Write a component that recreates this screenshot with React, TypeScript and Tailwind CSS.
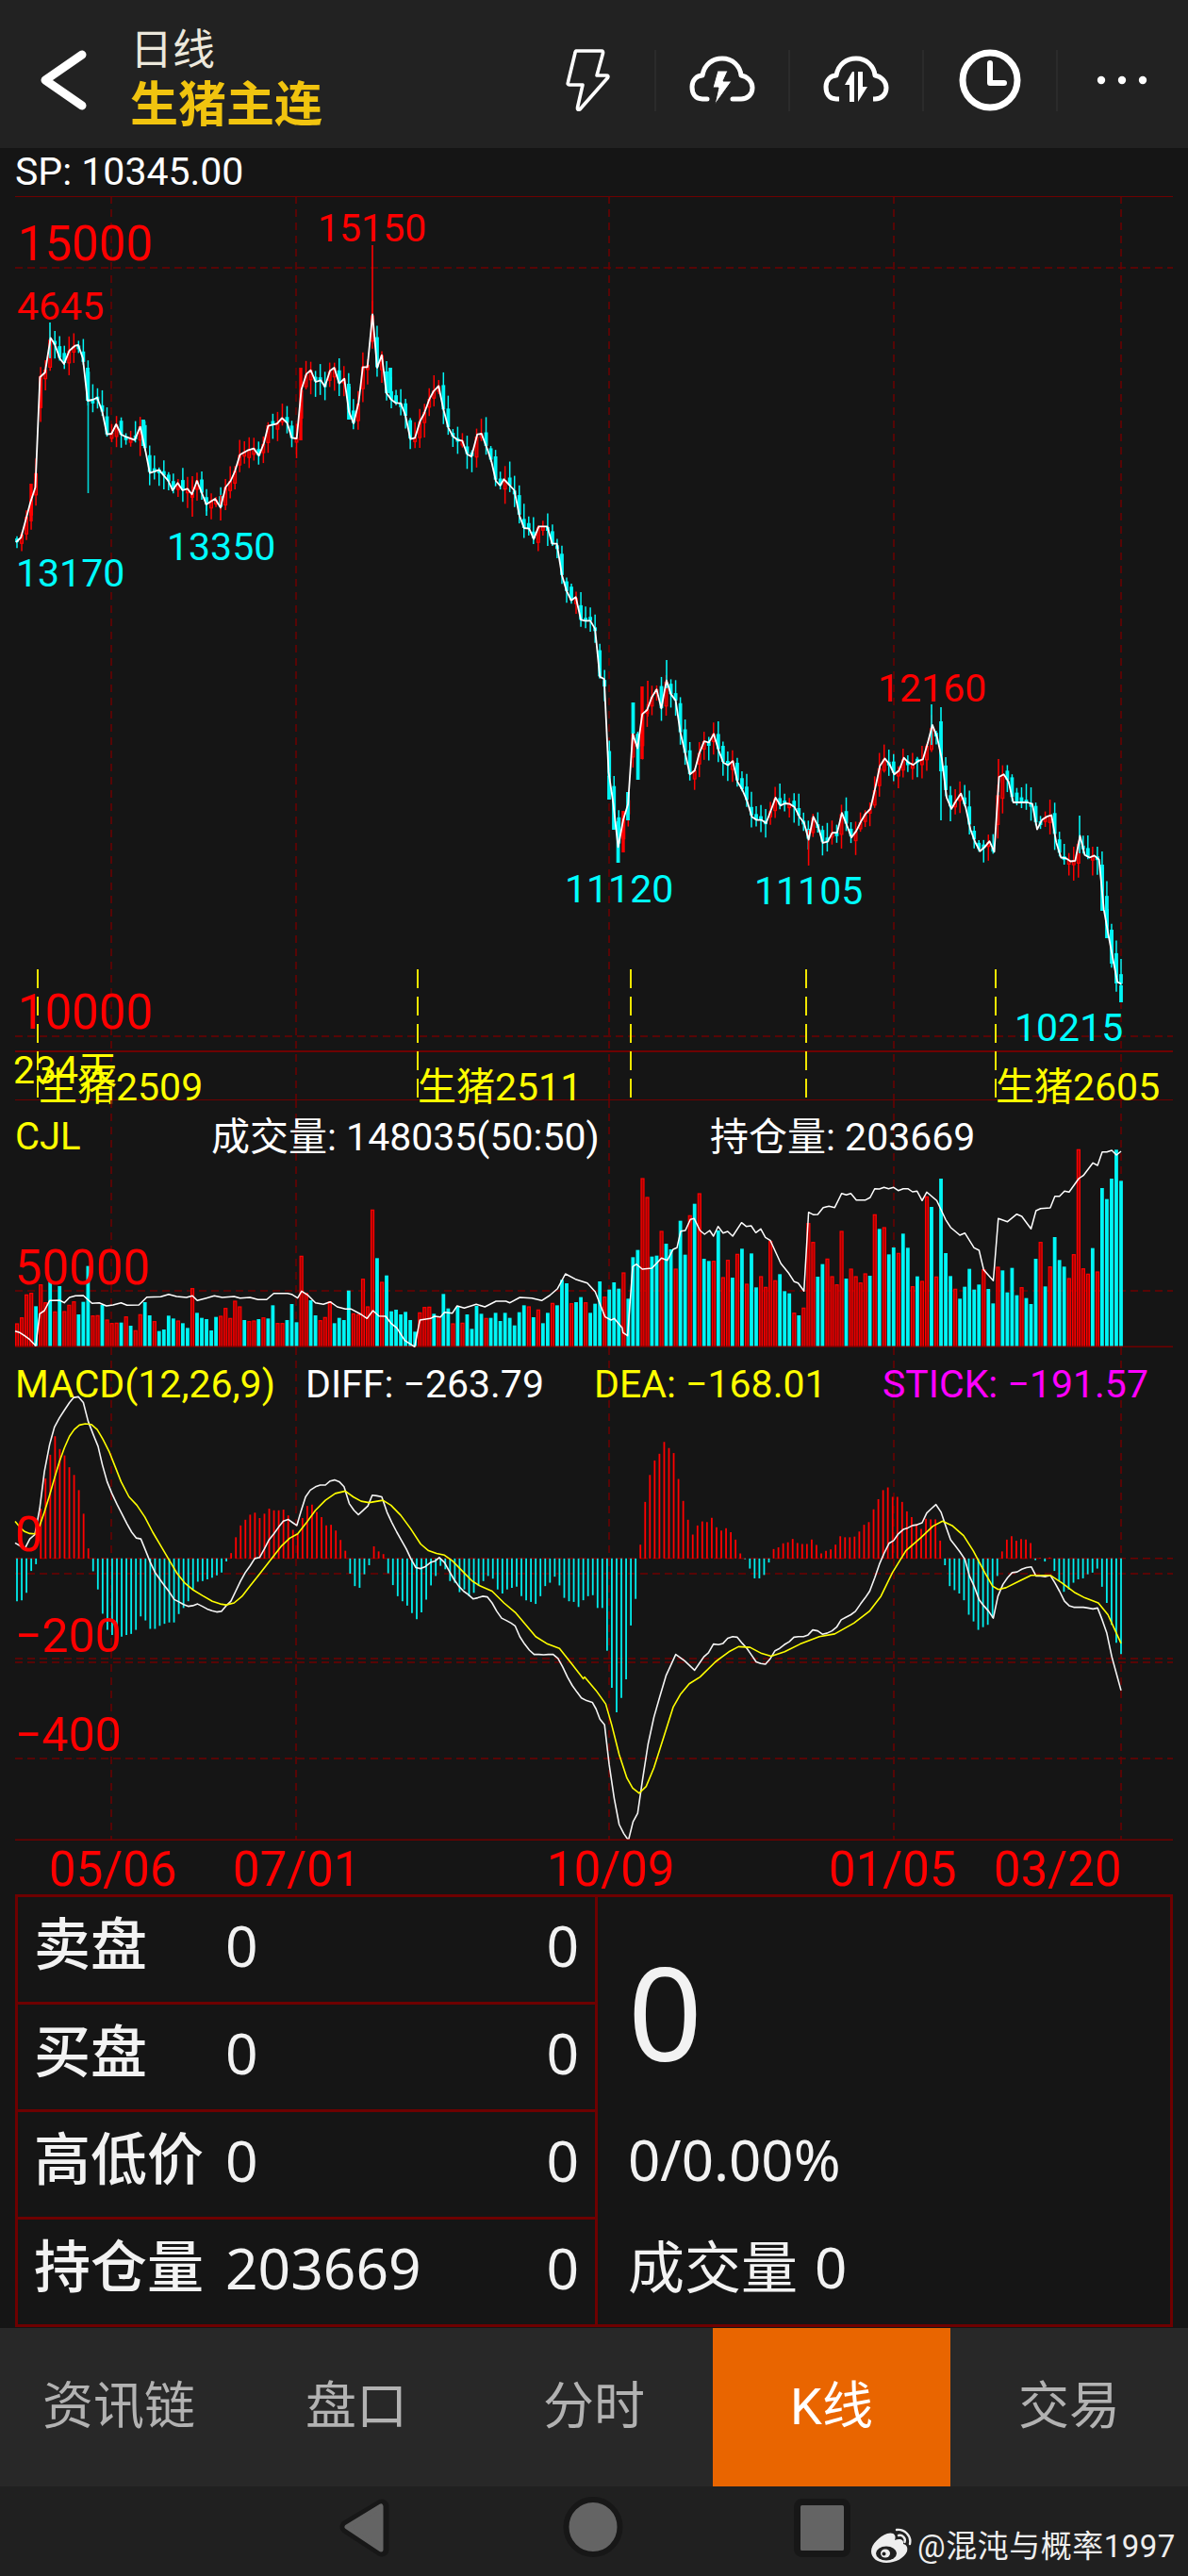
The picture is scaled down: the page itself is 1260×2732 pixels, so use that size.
const VX = [118, 314, 646, 948, 1189];
const RED = "#ff0000";
const CY = "#00f6f6";
const GRID = "#6e0000";

type Pt = [number, number];
const parsePts = (s: string, fx: (n: number) => number, fy: (n: number) => number): Pt[] =>
  s.trim().split(/\s+/).map((p) => {
    const [a, b] = p.split(",").map(Number);
    return [fx(a), fy(b)] as Pt;
  });
const toD = (p: Pt[]) => p.map((q) => `${q[0].toFixed(1)},${q[1].toFixed(1)}`).join(" ");
const interp = (p: Pt[], x: number) => {
  if (x <= p[0][0]) return p[0][1];
  for (let i = 1; i < p.length; i++) {
    if (x <= p[i][0]) {
      const t = (x - p[i - 1][0]) / (p[i][0] - p[i - 1][0] || 1);
      return p[i - 1][1] + (p[i][1] - p[i - 1][1]) * t;
    }
  }
  return p[p.length - 1][1];
};
const rnd = (i: number, k: number) => {
  const v = Math.sin(i * 12.9898 + k * 78.233) * 43758.5453;
  return v - Math.floor(v);
};

const priceLine: Pt[] = [
  ...parsePts(
    `38,825 50,810 62,750 72,700 84,650 95,300 107,285 120,175 130,195 142,240 152,258 165,215 178,200 186,198 197,240 208,375 220,372 231,365 243,410 254,482 265,480 276,450 288,483 300,490 320,500 333,458 345,530 356,605 378,595 400,630 410,660 422,637 434,660 445,655 456,673 468,630 480,670 490,705 511,687 524,715 536,650 548,630 558,600 570,547 590,532 603,527 615,550 627,510 637,455 658,448 670,430 682,445 693,493 705,495 716,340 728,290 738,278 750,315 762,310 772,330 784,280 794,270 806,320 818,305 829,410 840,447 852,380 862,268 873,268 885,100 896,270 907,230 918,350 930,372 940,382 952,383 963,420 975,497 986,493 998,440 1008,415 1020,370 1030,345 1042,328 1053,400 1065,460 1076,488 1088,500 1098,502 1110,545 1120,553 1134,482 1144,480 1158,530 1168,570 1178,630 1188,645 1197,625 1208,640 1222,660 1234,740 1245,780 1257,782 1268,815 1280,775 1300,775 1312,830 1323,830 1335,930 1346,980 1357,1010 1368,1000 1380,1072`,
    (x) => x / 2.24,
    (y) => 300 + y / 3
  ),
  ...parsePts(
    `50,25 62,25 74,50 86,200 97,208 108,500 120,600 132,735 145,650 157,600 169,380 181,425 193,318 205,305 217,265 229,240 241,300 254,212 265,255 277,275 289,375 301,440 313,507 325,495 337,440 349,403 361,407 373,380 385,430 397,470 409,478 421,465 433,530 445,555 457,590 469,640 481,650 493,650 505,660 517,620 529,580 541,605 553,598 565,600 577,610 589,640 601,660 612,712 624,640 636,670 648,722 660,718 672,690 684,690 696,628 708,665 720,705 732,685 744,655 756,630 768,615 780,550 792,480 804,457 816,475 828,507 840,495 852,455 864,470 876,477 888,465 900,460 912,410 924,352 936,390 948,460 960,580 972,615 984,590 996,567 1008,610 1020,680 1032,720 1044,748 1056,735 1068,717 1080,750 1092,515 1104,507 1116,530 1128,595 1140,595 1152,595 1164,595 1176,600 1188,680 1200,650 1212,640 1224,635 1236,720 1248,768 1260,770 1272,780 1284,778 1296,700 1308,760 1320,768 1332,762 1344,775 1356,930 1366,1000 1378,1080 1390,1158 1400,1165`,
    (x) => 600 + x / 2.376,
    (y) => 650 + y / 2.96
  ),
];

// Explicit long wicks and large bodies read from the reference: x, y1, y2, colour, kind
const extras: [number, number, number, "r" | "c", number][] = [
  [43, 400, 433, "r", 3.4],
  [33, 513, 553, "r", 3.4],
  [93, 390, 425, "c", 3.8],
  [319, 390, 467, "r", 3.4],
  [152, 445, 473, "c", 3.8],
  [370, 410, 445, "c", 3.8],
  [414, 390, 417, "c", 3.8],
  [646, 823, 848, "c", 3.8],
  [651, 840, 880, "c", 3.8],
  [655.6, 871, 915, "c", 3.8],
  [661, 860, 904, "r", 3.4],
  [666, 840, 870, "c", 3.8],
  [671.5, 745, 778, "c", 3.8],
  [676.6, 778, 827, "c", 3.8],
  [681, 728, 805, "r", 3.4],
  [1169, 917, 966, "c", 3.8],
  [1174, 964, 995, "c", 3.8],
  [1179, 986, 1022, "c", 3.8],
  [1184, 1018, 1043, "c", 3.8],
  [1189, 1045, 1063, "c", 3.8],
  [707, 700, 730, "c", 1.6],
  [687, 722, 760, "r", 1.6],
  [988, 747, 790, "c", 1.6],
  [998, 750, 870, "c", 1.6],
  [998, 765, 818, "c", 3.8],
  [857.6, 880, 918, "r", 1.6],
  [234, 525, 552, "r", 1.6],
  [204, 505, 548, "r", 1.6],
  [219, 530, 547, "c", 1.6],
  [1059, 805, 840, "r", 1.6],
  [1145, 865, 905, "c", 1.6],
];

const volData = (
  "r762 r743 r670 r665 c706 r638 r695 c628 r724 c642 r723 r703 r692 c732 c692 c578 r737 r736 c702 r750 r761 r760 c758 r740 c768 r784 r733 c693 c735 r755 c785 c780 c736 c745 r753 c760 c775 r650 c727 c743 c747 c783 c740 r738 r713 r745 r690 r708 c750 r755 r753 c747 r743 c745 c703 r761 r761 c750 c699 c757 r547 r665 c687 c735 r752 r742 r692 c760 c743 c750 c656 r730 r733 r620 r708 r400 c553 r630 c608 c722 c717 c732 c724 c750 c787 r727 r710 r709 c730 r740 c667 c713 r762 c708 r760 c732 c778 c705 c730 r745 c743 c727 c753 c727 c743 c767 c725 c703 r708 c741 r718 c760 c727 r697 c703 c622 c633 r698 c693 c677 " +
  "r695 c727 c698 c627 r677 c653 c630 c650 r600 c682 c550 c527 r300 r360 c548 c545 r468 c507 c525 r588 c434 c542 r418 c380 r348 c555 c562 r563 c465 r615 r560 c615 r541 c523 r636 c538 c646 r612 r646 r500 r625 c604 c658 c665 r728 c735 r712 r443 r503 c612 c572 r556 r612 r638 r468 c618 r588 r612 r632 r603 c609 r415 c460 r456 c541 c519 r538 c475 c520 r644 c611 r627 r358 c390 r613 c300 c537 c610 r652 c682 c644 c587 c653 c637 r590 c651 c697 r582 c592 c662 c584 c671 r647 c680 c699 c555 r503 c643 r581 c486 c559 c580 r618 r542 r208 r587 r604 c521 r597 c330 c365 c300 c208 c307"
).split(" ");

const histData = (
  "c695 c692 c670 c605 c585 r420 r330 r260 r205 r243 r262 r297 r320 r365 r435 r538 c606 c660 c732 c780 c795 c800 c800 c795 c792 c780 c740 c752 c777 c777 c768 c762 c758 c758 c733 c715 c695 c660 c637 c635 c630 c625 c618 c610 c577 r552 r505 r470 r453 r438 r432 r448 r435 r420 r425 r425 r423 r440 r483 r495 r448 r412 r408 r430 r445 r470 r468 r485 r513 r545 c613 c650 c655 c615 c588 r532 r547 r555 c612 c647 c680 c695 c708 c730 c748 c728 c690 c648 c620 c590 c600 c635 c640 c668 c660 c680 c670 c650 c635 c620 c628 c660 c672 c660 c655 c652 c680 c692 c697 c703 c680 c650 c640 c622 c648 c685 c695 c697 c712 " +
  "c692 c680 c677 c715 c715 c842 c952 c1025 c982 c927 c767 c688 r527 r400 r320 r277 r257 r222 r240 r255 r332 r397 r453 r497 r470 r458 r460 r447 r475 r485 r478 r490 r512 r553 c570 c598 c627 c627 c617 c580 r540 r535 r523 r520 r510 r522 r525 r525 r512 r528 r553 r545 r541 r527 r502 r505 r505 r503 r488 r468 r460 r422 r392 r365 r357 r385 r385 r400 r428 r445 r465 r480 r450 r452 r452 r515 c588 c650 c662 c672 c692 c735 c755 c780 c772 c765 c745 c620 r547 r512 r502 r515 r510 r512 r522 c573 r566 c577 r565 c605 c635 c667 c660 c640 c630 c627 c615 c610 c598 c652 c700 c765 c818 c852"
).split(" ");

const oiLine: Pt[] = [
  ...parsePts(
    `38,785 50,790 62,800 75,812 90,832 100,730 112,720 125,688 150,687 162,695 175,678 190,673 210,672 232,697 250,695 268,705 285,702 305,695 320,703 350,702 370,677 405,676 425,668 445,675 470,678 485,673 497,688 520,680 540,673 560,678 590,675 605,680 630,678 650,685 672,685 690,665 725,665 735,668 750,680 760,658 775,670 795,695 815,700 832,692 850,708 870,715 885,715 910,732 925,745 940,720 955,737 972,738 985,760 1000,775 1020,815 1045,835 1058,750 1085,745 1095,738 1110,740 1120,725 1140,728 1152,705 1170,712 1200,700 1222,708 1250,690 1275,690 1285,695 1310,678 1340,680 1365,688 1385,672 1405,650 1425,603 1450,620 1480,632 1500,660 1525,740 1540,750 1548,745 1568,775`,
    (x) => x / 2.376,
    (y) => 1150 + y / 3
  ),
  ...parsePts(
    `100,790 112,800 125,580 135,572 150,588 175,585 200,553 215,560 230,525 240,520 250,467 262,465 275,430 285,427 300,465 312,477 325,465 335,483 347,452 360,473 372,468 385,483 408,440 420,452 433,450 445,472 458,460 470,487 483,497 510,570 530,600 545,628 555,632 570,658 582,407 595,415 606,414 620,392 635,388 650,392 668,347 680,352 692,347 706,368 730,368 742,360 754,332 766,333 778,328 790,332 803,328 815,338 828,332 840,332 852,342 864,340 877,370 889,343 915,370 938,430 951,455 975,480 988,473 1012,520 1025,528 1037,590 1062,625 1075,427 1099,437 1123,413 1136,420 1160,460 1173,402 1185,395 1210,393 1222,356 1234,356 1247,340 1259,343 1284,300 1296,290 1321,250 1333,258 1345,215 1357,215 1370,210 1382,225 1394,213`,
    (x) => 620 + x / 2.45,
    (y) => 1150 + y / 3
  ),
];

const diffLine: Pt[] = [
  ...parsePts(
    `38,522 50,530 62,540 75,510 88,497 100,420 112,310 125,230 137,178 150,150 162,128 175,105 186,90 198,88 210,105 222,160 235,200 247,235 258,290 270,340 282,375 295,408 307,435 320,465 332,490 343,507 355,510 367,545 379,580 391,610 403,630 415,650 427,668 439,690 451,697 463,705 474,710 486,708 498,703 510,710 522,718 534,723 546,727 558,725 570,708 582,695 594,665 606,635 618,610 630,590 642,568 654,565 666,540 678,512 690,495 702,475 714,457 726,452 738,462 748,470 758,430 770,385 782,365 795,355 807,350 820,350 832,338 843,335 855,340 867,355 880,405 892,425 903,438 915,425 927,412 938,380 950,382 962,385 975,430 987,460 1000,490 1012,515 1024,540 1036,570 1048,595 1060,598 1072,592 1085,580 1097,575 1107,565 1120,580 1132,605 1144,630 1156,650 1168,665 1180,675 1192,688 1204,685 1216,680 1228,682 1240,700 1252,725 1264,745 1276,752 1288,760 1298,768 1310,800 1322,822 1334,840 1346,853 1358,853 1370,854 1382,853 1394,853 1406,865 1418,890 1430,920 1442,945 1454,965 1465,982 1478,990`,
    (x) => x / 2.376,
    (y) => 1450 + y / 2.8
  ),
  ...parsePts(
    `20,995 30,1015 40,1045 52,1062 64,1180 77,1280 90,1358 102,1385 114,1405 126,1350 138,1325 150,1230 165,1120 180,1040 195,980 212,915 237,853 260,872 286,900 298,880 310,860 322,848 335,822 348,824 360,820 372,805 385,800 397,802 410,820 422,835 434,855 446,875 458,880 470,882 483,865 495,842 507,835 519,824 532,815 544,802 556,800 569,800 581,795 593,780 606,783 618,793 630,790 643,783 655,772 667,750 680,742 692,735 704,725 717,703 729,685 741,665 754,625 766,585 778,553 791,523 803,515 815,495 828,482 840,477 852,470 864,468 877,462 889,433 901,420 913,408 926,430 938,470 951,512 963,530 975,548 988,570 1000,620 1012,650 1025,690 1037,708 1050,725 1062,745 1074,680 1087,645 1099,625 1111,610 1124,608 1136,600 1148,595 1161,593 1173,620 1185,620 1198,622 1210,618 1222,640 1234,665 1247,695 1259,708 1271,713 1284,713 1296,713 1308,715 1321,718 1333,715 1345,750 1357,790 1370,860 1382,910 1394,960`,
    (x) => 620 + x / 2.45,
    (y) => 1450 + y / 2.8
  ),
];

const deaLine: Pt[] = [
  ...parsePts(
    `38,458 50,475 62,488 75,494 88,495 100,470 112,430 125,380 137,330 150,280 162,240 175,205 187,185 200,172 215,168 230,170 245,185 260,215 275,250 290,295 305,340 325,385 345,410 365,445 385,490 405,530 425,570 445,610 465,640 485,660 510,678 535,695 555,703 570,706 590,700 610,680 630,650 650,620 670,590 690,560 710,530 730,508 750,495 770,465 795,425 820,395 845,375 870,368 890,385 910,398 930,402 965,395 985,410 1010,440 1035,480 1060,525 1080,545 1100,553 1120,558 1140,575 1165,605 1190,635 1210,650 1240,665 1270,700 1300,730 1325,765 1350,800 1380,822 1410,835 1440,880 1470,925`,
    (x) => x / 2.376,
    (y) => 1450 + y / 2.8
  ),
  ...parsePts(
    `0,920 30,960 55,1000 70,1060 90,1150 110,1220 125,1250 142,1265 160,1245 180,1190 205,1100 230,1010 250,970 272,940 300,920 340,875 375,845 400,830 430,832 460,850 485,858 520,845 560,822 610,800 650,792 700,760 740,725 770,680 800,610 835,545 875,505 905,472 930,457 955,470 985,500 1010,545 1040,610 1060,650 1075,660 1095,655 1130,635 1160,618 1210,618 1240,640 1275,670 1300,685 1335,700 1360,735 1394,820`,
    (x) => 620 + x / 2.45,
    (y) => 1450 + y / 2.8
  ),
];

const BAR0 = 18;
const BAR1 = 1189;

function VGrid({ y1, y2 }: { y1: number; y2: number }) {
  return (
    <g stroke={GRID} strokeWidth={1.5} strokeDasharray="8 6">
      {VX.map((x) => (
        <line key={x} x1={x} x2={x} y1={y1} y2={y2} />
      ))}
    </g>
  );
}
function HDash({ y }: { y: number }) {
  return <line x1={16} x2={1244} y1={y} y2={y} stroke={GRID} strokeWidth={1.5} strokeDasharray="8 5" />;
}
function HSolid({ y }: { y: number }) {
  return <line x1={16} x2={1244} y1={y} y2={y} stroke={GRID} strokeWidth={2} />;
}

function MainChart() {
  const n = 234;
  const pitch = (BAR1 - BAR0) / (n - 1);
  const candles = Array.from({ length: n }, (_, i) => {
    const x = BAR0 + pitch * i;
    const close = interp(priceLine, x);
    const prev = interp(priceLine, x - pitch);
    const delta = Math.max(-32, Math.min(32, prev - close));
    const open = close + delta * 0.9 + (rnd(i, 1) - 0.5) * 12;
    const top = Math.min(open, close);
    const bot = Math.max(open, close, top + 4);
    const wt = top - rnd(i, 2) * 15 - 2;
    const wb = bot + rnd(i, 3) * 15 + 2;
    const down = open < close;
    return { x, top, bot, wt, wb, down };
  });
  return (
    <svg viewBox="0 208 1260 959" className="absolute inset-0 h-full w-full">
      <VGrid y1={208} y2={1167} />
      <HSolid y={208} />
      <HDash y={284} />
      <HDash y={1099} />
      <HSolid y={1115} />
      <HSolid y={1167} />
      <g stroke="#f2e600" strokeWidth={2} strokeDasharray="20 9">
        {[40, 443, 669, 855, 1056].map((x) => (
          <line key={x} x1={x} x2={x} y1={1028} y2={1167} />
        ))}
      </g>
      {candles.map((c, i) => (
        <g key={i}>
          <line x1={c.x} x2={c.x} y1={c.wt} y2={c.wb} stroke={c.down ? CY : RED} strokeWidth={1.5} />
          {c.down ? (
            <rect x={c.x - 1.9} y={c.top} width={3.8} height={c.bot - c.top} fill={CY} />
          ) : (
            <rect x={c.x - 1.4} y={c.top} width={2.8} height={c.bot - c.top} fill="#b00000" stroke={RED} strokeWidth={1.1} />
          )}
        </g>
      ))}
      {extras.map(([x, a, b, k, w], i) => (
        <rect key={i} x={x - w / 2} y={a} width={w} height={b - a} fill={k === "r" ? RED : CY} />
      ))}
      <line x1={395} x2={395} y1={260} y2={335} stroke={RED} strokeWidth={1.6} />
      <line x1={53} x2={53} y1={342} y2={380} stroke={CY} strokeWidth={1.6} />
      <line x1={93.5} x2={93.5} y1={425} y2={523} stroke="#00d8d8" strokeWidth={1.6} />
      <polyline points={toD(priceLine)} fill="none" stroke="#ffffff" strokeWidth={1.8} strokeLinejoin="round" />
    </svg>
  );
}

function VolChart() {
  const pitch = (BAR1 - BAR0) / (volData.length - 1);
  const base = 1429;
  return (
    <svg viewBox="0 1167 1260 262" className="absolute inset-0 h-full w-full">
      <VGrid y1={1167} y2={1429} />
      <HDash y={1369} />
      {volData.map((v, i) => {
        const x = BAR0 + pitch * i;
        const y = 1150 + Number(v.slice(1)) / 3;
        return v[0] === "r" ? (
          <rect key={i} x={x - 1.4} y={y} width={3} height={base - y} fill="#a80000" stroke={RED} strokeWidth={1.2} />
        ) : (
          <rect key={i} x={x - 1.9} y={y} width={3.8} height={base - y} fill={CY} />
        );
      })}
      <HSolid y={1428.5} />
      <polyline points={toD(oiLine)} fill="none" stroke="#ffffff" strokeWidth={1.5} strokeLinejoin="round" />
    </svg>
  );
}

function MacdChart() {
  const pitch = (BAR1 - BAR0) / (histData.length - 1);
  const zero = 1450 + 568 / 2.8;
  return (
    <svg viewBox="0 1429 1260 523" className="absolute inset-0 h-full w-full">
      <VGrid y1={1429} y2={1952} />
      <HDash y={zero} />
      <HDash y={1669} />
      <HDash y={1759} />
      <HDash y={1763} />
      <HDash y={1865} />
      {histData.map((v, i) => {
        const x = BAR0 + pitch * i;
        const y = 1450 + Number(v.slice(1)) / 2.8;
        return <line key={i} x1={x} x2={x} y1={zero} y2={y} stroke={v[0] === "r" ? RED : "#00eeee"} strokeWidth={1.8} />;
      })}
      <polyline points={toD(diffLine)} fill="none" stroke="#f4f4f4" strokeWidth={1.6} strokeLinejoin="round" />
      <polyline points={toD(deaLine)} fill="none" stroke="#ffff00" strokeWidth={1.6} strokeLinejoin="round" />
      <HSolid y={1951.5} />
    </svg>
  );
}

function Cloud({ children }: { children: React.ReactNode }) {
  return (
    <svg width="70" height="52" viewBox="0 0 70 52" fill="none">
      <path
        d="M19 46 H14 C6 46 3 40 3 33 C3 26 8 21 14 21 C16 9 25 3 35 3 C46 3 54 11 55 21 C62 22 67 28 67 34 C67 41 62 46 55 46 H46"
        stroke="#fff"
        strokeWidth="5"
        strokeLinecap="round"
        strokeLinejoin="round"
      />
      {children}
    </svg>
  );
}

function Header() {
  return (
    <header className="flex h-[157px] items-center bg-[#222222] pl-[42px] pt-[13px]">
      <svg width="50" height="64" viewBox="0 0 50 64" fill="none" className="shrink-0">
        <path d="M45 5 L6 32 L45 59" stroke="#fff" strokeWidth="9" strokeLinecap="round" strokeLinejoin="round" />
      </svg>
      <div className="ml-[46px] flex w-[416px] flex-col pb-[3px]">
        <span className="text-[45px] leading-[52px] text-[#ece8dc]">日线</span>
        <span className="mt-[4px] text-[51px] font-bold leading-[56px] text-[#f1c40f]">生猪主连</span>
      </div>
      <div className="flex h-[65px] w-[142px] items-center justify-center border-r-2 border-[#2b2b2b]">
        <svg width="48" height="68" viewBox="0 0 48 68" fill="none">
          <path d="M11 3 H38 Q40 3 39.5 5.5 L33 29 H43 Q46 29 44.5 31.5 L15 65 Q12 66 12.5 63 L18 39 H4 Q1.5 39 2.5 36 L10 5 Q10.3 3 11 3 Z" stroke="#fff" strokeWidth="3.6" strokeLinejoin="round" />
        </svg>
      </div>
      <div className="flex h-[65px] w-[142px] items-center justify-center border-r-2 border-[#2b2b2b]">
        <Cloud>
          <path d="M38 16 H30 L25 34 H31 L27 52 L45 27 H36 L41 16 Z" fill="#fff" stroke="#222" strokeWidth="1" />
        </Cloud>
      </div>
      <div className="flex h-[65px] w-[142px] items-center justify-center border-r-2 border-[#2b2b2b]">
        <Cloud>
          <rect x="17" y="40" width="36" height="12" fill="#222" />
          <path d="M31 17 L23 31 H28 V49 H33 V17 Z" fill="#fff" />
          <path d="M37 17 V49 L47 33 H42 V17 Z" fill="#fff" />
        </Cloud>
      </div>
      <div className="flex h-[65px] w-[142px] items-center justify-center border-r-2 border-[#2b2b2b]">
        <svg width="66" height="66" viewBox="0 0 66 66" fill="none">
          <circle cx="33" cy="33" r="29" stroke="#fff" strokeWidth="7" />
          <path d="M33 15 V36 H48" stroke="#fff" strokeWidth="6" strokeLinecap="round" strokeLinejoin="round" />
        </svg>
      </div>
      <div className="flex h-[65px] w-[136px] items-center justify-center">
        <svg width="54" height="10" viewBox="0 0 54 10" fill="#fff">
          <circle cx="5" cy="5" r="4.2" />
          <circle cx="27" cy="5" r="4.2" />
          <circle cx="49" cy="5" r="4.2" />
        </svg>
      </div>
    </header>
  );
}

function Row({ label, value, bordered }: { label: string; value: string; bordered?: boolean }) {
  return (
    <div className={`flex flex-1 items-center pb-[8px] pl-[17px] pr-[17px] leading-none ${bordered ? "border-b-[3px] border-[#6e0000]" : ""}`}>
      <span className="w-[203px] shrink-0 text-[60px] font-medium">{label}</span>
      <span className="font-['Noto_Sans'] text-[60.5px]">{value}</span>
      <span className="ml-auto font-['Noto_Sans'] text-[60.5px]">0</span>
    </div>
  );
}

function Tab({ label, active }: { label: string; active?: boolean }) {
  return (
    <div className={`flex items-center justify-center pb-[2px] text-[54px] ${active ? "bg-[#e96500] text-white" : "text-[#b2b2b2]"}`}>
      {label}
    </div>
  );
}

export default function App() {
  return (
    <div className="relative h-[2732px] w-[1260px] overflow-hidden bg-[#151515] text-white [font-family:Roboto,'Noto_Sans_CJK_SC',sans-serif]">
      <Header />
      <div className="flex h-[51px] items-center pl-[16px] text-[41px] leading-none">SP: 10345.00</div>

      <section className="relative h-[959px]">
        <MainChart />
        <div className="text-[41px] leading-none text-[#ff0000]">
          <span className="absolute left-[19px] top-[25px] text-[51px]">15000</span>
          <span className="absolute left-[337px] top-[14px]">15150</span>
          <span className="absolute left-[18px] top-[97px]">4645</span>
          <span className="absolute left-[931px] top-[502px]">12160</span>
          <span className="absolute left-[19px] top-[840px] text-[51px]">10000</span>
        </div>
        <div className="text-[41px] leading-none text-[#00ffff]">
          <span className="absolute left-[17px] top-[380px]">13170</span>
          <span className="absolute left-[177px] top-[352px]">13350</span>
          <span className="absolute left-[599px] top-[715px]">11120</span>
          <span className="absolute left-[800px] top-[717px]">11105</span>
          <span className="absolute left-[1076px] top-[862px]">10215</span>
        </div>
        <div className="text-[41px] leading-none text-[#ffff00]">
          <span className="absolute left-[14px] top-[907px]">234天</span>
          <span className="absolute left-[41px] top-[925px]">生猪2509</span>
          <span className="absolute left-[443px] top-[925px]">生猪2511</span>
          <span className="absolute left-[1056px] top-[925px]">生猪2605</span>
        </div>
      </section>

      <section className="relative h-[262px]">
        <VolChart />
        <div className="relative flex pl-[16px] pt-[19px] text-[41px] leading-none">
          <span className="w-[208px] text-[40px] text-[#ffff00]">CJL</span>
          <span className="w-[529px]">成交量: 148035(50:50)</span>
          <span>持仓量: 203669</span>
        </div>
        <span className="absolute left-[16px] top-[152px] text-[51px] leading-none text-[#ff0000]">50000</span>
      </section>

      <section className="relative h-[523px]">
        <MacdChart />
        <div className="relative flex pl-[16px] pt-[19px] text-[41px] leading-none">
          <span className="w-[308px] text-[#ffff00]">MACD(12,26,9)</span>
          <span className="w-[306px]">DIFF: −263.79</span>
          <span className="w-[306px] text-[#ffff00]">DEA: −168.01</span>
          <span className="text-[#ff00ff]">STICK: −191.57</span>
        </div>
        <div className="text-[50px] leading-none text-[#ff0000]">
          <span className="absolute left-[16px] top-[173px] text-[52px]">0</span>
          <span className="absolute left-[16px] top-[281px]">−200</span>
          <span className="absolute left-[16px] top-[386px]">−400</span>
        </div>
      </section>

      <div className="flex h-[57px] pl-[52px] pt-[5px] text-[51px] leading-none text-[#ff0000]">
        <span className="w-[195px]">05/06</span>
        <span className="w-[333px]">07/01</span>
        <span className="w-[299px]">10/09</span>
        <span className="w-[175px]">01/05</span>
        <span>03/20</span>
      </div>

      <div className="h-[460px] pl-[16px]">
        <div className="flex h-[459px] w-[1228px] border-[3px] border-[#6e0000] text-[#f2f2f2]">
          <div className="flex w-[615px] flex-col border-r-[3px] border-[#6e0000]">
            <Row label="卖盘" value="0" bordered />
            <Row label="买盘" value="0" bordered />
            <Row label="高低价" value="0" bordered />
            <Row label="持仓量" value="203669" />
          </div>
          <div className="flex flex-1 flex-col pl-[32px] font-['Noto_Sans','Noto_Sans_CJK_SC',sans-serif] leading-none">
            <div className="flex flex-[2] items-center pt-[14px] text-[138px]">0</div>
            <div className="flex flex-1 items-center pb-[8px] text-[60px]">0/0.00%</div>
            <div className="flex flex-1 items-center gap-[18px] pb-[8px] text-[60px]">
              <span>成交量</span>
              <span>0</span>
            </div>
          </div>
        </div>
      </div>

      <nav className="grid h-[168px] grid-cols-5 bg-[#282828]">
        <Tab label="资讯链" />
        <Tab label="盘口" />
        <Tab label="分时" />
        <Tab label="K线" active />
        <Tab label="交易" />
      </nav>

      <div className="relative flex h-[95px] items-start bg-[#202020] pl-[356px] pt-[10px]">
        <svg width="58" height="70" viewBox="0 0 58 70" className="-mt-[1px] shrink-0">
          <path d="M12 34 L49 12 V58 Z" fill="#171717" stroke="#171717" strokeWidth="15" strokeLinejoin="round" />
          <path d="M12 34 L48 12 V58 Z" fill="#646464" stroke="#646464" strokeWidth="5" strokeLinejoin="round" />
        </svg>
        <svg width="68" height="66" viewBox="0 0 68 66" className="ml-[181px] shrink-0">
          <ellipse cx="34" cy="33" rx="28.5" ry="29" fill="#646464" stroke="#171717" strokeWidth="6" />
        </svg>
        <svg width="60" height="62" viewBox="0 0 60 62" className="ml-[179px] mt-[3px] shrink-0">
          <rect x="3.5" y="3.5" width="53" height="55" rx="5" fill="#646464" stroke="#171717" strokeWidth="7" />
        </svg>
        <div className="absolute left-[922px] top-[44px] flex items-center">
          <svg width="46" height="38" viewBox="0 0 46 38" fill="none" className="shrink-0">
            <path d="M2 25 C2 17 11 9 19 6 C26 4 29 8 27 13 C32 11 37 12 36 17 C40 18 41 21 40 25 C37 32 28 37 18 37 C9 37 2 32 2 25 Z" fill="#eeeeee" />
            <ellipse cx="18" cy="27" rx="11" ry="7.5" fill="#202020" />
            <ellipse cx="17" cy="27" rx="5" ry="4.5" fill="#eeeeee" />
            <circle cx="15.5" cy="27.5" r="2" fill="#202020" />
            <path d="M29 2 C37 1 45 8 43 17" stroke="#eeeeee" strokeWidth="2.4" strokeLinecap="round" />
            <path d="M31 8 C35 7 39 11 37.5 15" stroke="#eeeeee" strokeWidth="2.4" strokeLinecap="round" />
          </svg>
          <span className="ml-[5px] whitespace-nowrap text-[33px] leading-none tracking-[0.5px] text-[#eeeeee]">@混沌与概率1997</span>
        </div>
      </div>
    </div>
  );
}
